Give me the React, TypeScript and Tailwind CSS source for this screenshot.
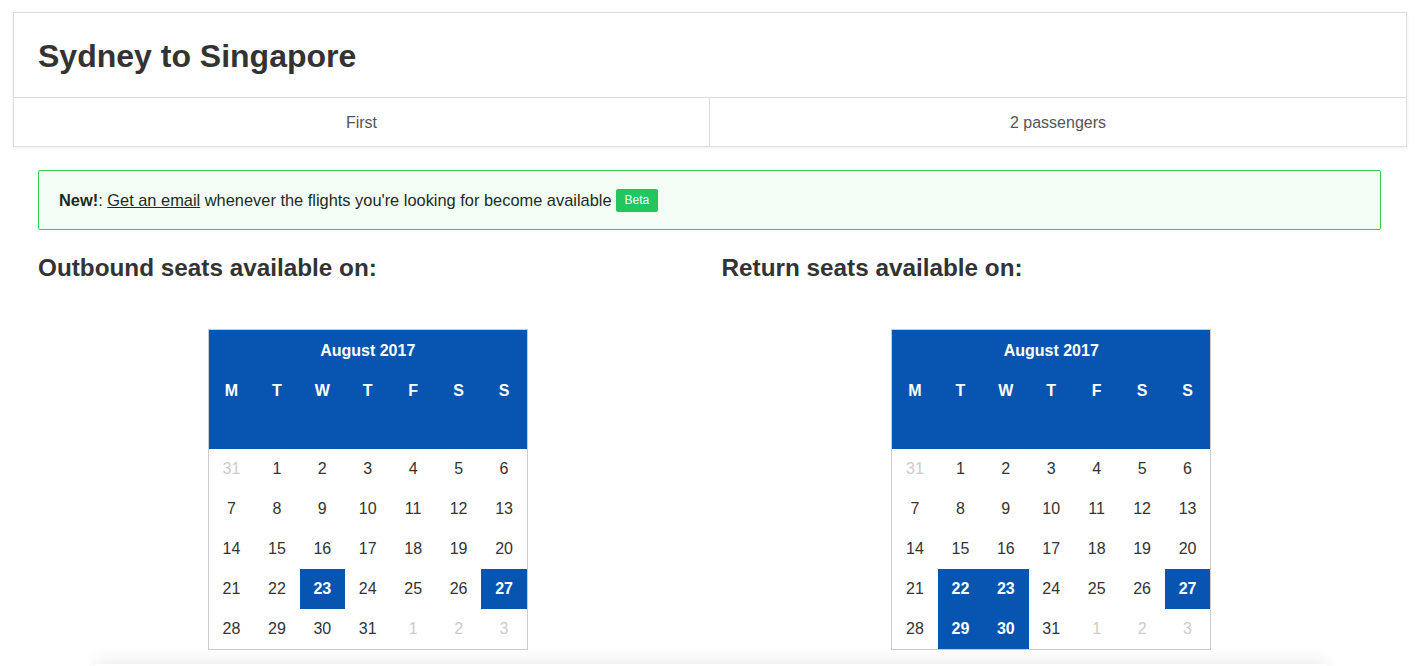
import React from "react";

type Cell = { d: number; muted?: boolean; on?: boolean };

const days = ["M", "T", "W", "T", "F", "S", "S"];

const buildWeeks = (selected: number[]): Cell[][] => {
  const cells: Cell[] = [{ d: 31, muted: true }];
  for (let i = 1; i <= 31; i++) cells.push({ d: i, on: selected.includes(i) });
  [1, 2, 3].forEach((d) => cells.push({ d, muted: true }));
  const weeks: Cell[][] = [];
  for (let i = 0; i < cells.length; i += 7) weeks.push(cells.slice(i, i + 7));
  return weeks;
};

const Calendar = ({ selected }: { selected: number[] }) => {
  const weeks = buildWeeks(selected);
  return (
    <div className="w-[320px] border border-[#cccccc] bg-white">
      <div className="h-[119px] bg-[#0855b1] text-white font-bold">
        <div className="h-[41px] flex items-center justify-center text-[16px] pt-[1px]">August 2017</div>
        <div className="grid grid-cols-7 h-[40px] items-center text-[16px]">
          {days.map((d, i) => (
            <div key={i} className="text-center">{d}</div>
          ))}
        </div>
      </div>
      {weeks.map((w, i) => (
        <div key={i} className="grid grid-cols-7 h-[40px]">
          {w.map((c, j) => (
            <div
              key={j}
              className={
                c.on
                  ? "flex items-center justify-center bg-[#0855b1] text-white font-bold text-[16px]"
                  : c.muted
                  ? "flex items-center justify-center text-[#cccccc] text-[16px]"
                  : "flex items-center justify-center text-[#333333] text-[16px]"
              }
            >
              {c.d}
            </div>
          ))}
        </div>
      ))}
    </div>
  );
};

export default function App() {
  return (
    <div className="h-[666px] bg-white font-['Liberation_Sans',Arial,sans-serif] text-[#333333] overflow-hidden">
      <div className="ml-[13px] w-[1394px] mt-[12px] border border-[#dddddd] shadow-[0_1px_3px_rgba(0,0,0,0.08)] bg-white">
        <div className="h-[84px] flex items-center px-[24px]">
          <h1 className="text-[32px] font-bold text-[#333333] pt-[1px]">Sydney to Singapore</h1>
        </div>
        <div className="grid grid-cols-2 border-t border-[#dddddd] h-[49px] text-[16px] text-[#555555]">
          <div className="flex items-center justify-center border-r border-[#dddddd] pt-[1px]">First</div>
          <div className="flex items-center justify-center pt-[1px]">2 passengers</div>
        </div>
      </div>

      <div className="ml-[38px] mt-[23px] mr-[41px]">
        <div className="h-[60px] flex items-center px-[20px] border border-[#2ecc5f] bg-[#f3fdf6] rounded-[2px] text-[16.4px] text-[#1e2a22]">
          <span className="font-bold">New!</span>:&nbsp;
          <a className="underline">Get an email</a>&nbsp;whenever the flights you're looking for become available
          <span className="ml-[4px] bg-[#22c55e] text-white text-[12px] rounded-[2px] px-[9px] h-[23px] flex items-center">Beta</span>
        </div>

        <div className="grid grid-cols-2 gap-[24px] mt-[24px]">
          <div>
            <h2 className="text-[24.3px] font-bold h-[28px] leading-[28px]">Outbound seats available on:</h2>
            <div className="flex justify-center mt-[47px]">
              <Calendar selected={[23, 27]} />
            </div>
          </div>
          <div>
            <h2 className="text-[24.3px] font-bold h-[28px] leading-[28px]">Return seats available on:</h2>
            <div className="flex justify-center mt-[47px]">
              <Calendar selected={[22, 23, 27, 29, 30]} />
            </div>
          </div>
        </div>
      </div>

      <div className="mx-[95px] mt-[14px] h-[40px] bg-white shadow-[0_-6px_14px_rgba(0,0,0,0.06)]"></div>
    </div>
  );
}
